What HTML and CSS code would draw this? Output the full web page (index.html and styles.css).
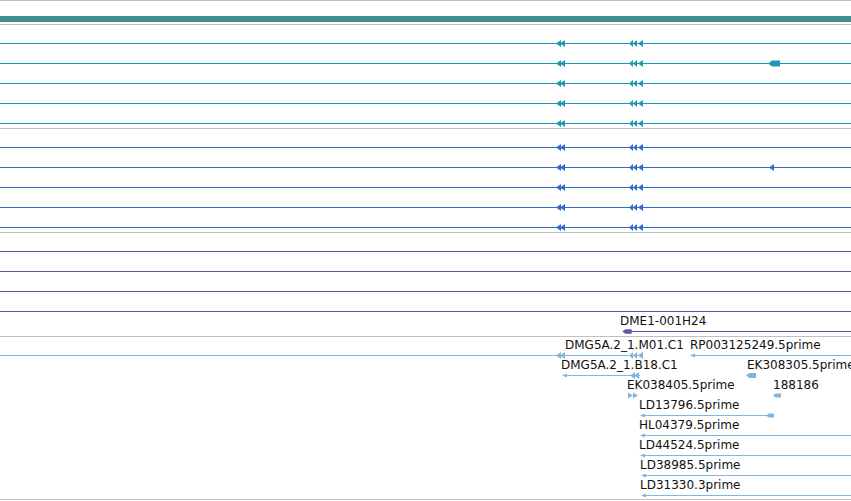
FILE: index.html
```html
<!DOCTYPE html>
<html lang="en">
<head>
    <meta charset="UTF-8">
    <title>Tracks</title>
    <link rel="stylesheet" href="styles.css">
</head>
<body>
    <!--glyph shapes, used by every track-->
    <svg class="defs" width="0" height="0">
        <symbol id="l1" viewBox="0 0 6 9"><polygon points="0,4.5 5,2.5 5,6.5"/></symbol>
        <symbol id="l2" viewBox="0 0 10 9"><polygon points="0,4.5 5,1 5,8"/><polygon points="4,4.5 9,1 9,8"/></symbol>
        <symbol id="l3" viewBox="0 0 14 9"><polygon points="0,4.5 4,1 4,8"/><polygon points="4,4.5 8,1 8,8"/><polygon points="9,4.5 14,1 14,8"/></symbol>
        <symbol id="tri" viewBox="0 0 6 9"><polygon points="0,4.5 5,1 5,8"/></symbol>
        <symbol id="blk" viewBox="0 0 12 9"><polygon points="0,4.5 4,1.5 12,1.5 12,7.5 4,7.5"/></symbol>
        <symbol id="r2" viewBox="0 0 10 9"><polygon points="0,1.5 5,4.5 0,7.5"/><polygon points="5,1.5 10,4.5 5,7.5"/></symbol>
    </svg>

    <div class="header">
        <div class="scale"></div>
    </div>

    <!--track 1-->
    <div class="track teal">
        <div class="row"><i class="line"></i>
            <svg class="g w10" style="left:556px"><use href="#l2"/></svg>
            <svg class="g w14" style="left:629px"><use href="#l3"/></svg>
        </div>
        <div class="row"><i class="line"></i>
            <svg class="g w10" style="left:556px"><use href="#l2"/></svg>
            <svg class="g w14" style="left:629px"><use href="#l3"/></svg>
            <svg class="g w12" style="left:768px"><use href="#blk"/></svg>
        </div>
        <div class="row"><i class="line"></i>
            <svg class="g w10" style="left:556px"><use href="#l2"/></svg>
            <svg class="g w14" style="left:629px"><use href="#l3"/></svg>
        </div>
        <div class="row"><i class="line"></i>
            <svg class="g w10" style="left:556px"><use href="#l2"/></svg>
            <svg class="g w14" style="left:629px"><use href="#l3"/></svg>
        </div>
        <div class="row"><i class="line"></i>
            <svg class="g w10" style="left:556px"><use href="#l2"/></svg>
            <svg class="g w14" style="left:629px"><use href="#l3"/></svg>
        </div>
    </div>

    <!--track 2-->
    <div class="track blue">
        <div class="row"><i class="line"></i>
            <svg class="g w10" style="left:556px"><use href="#l2"/></svg>
            <svg class="g w14" style="left:629px"><use href="#l3"/></svg>
        </div>
        <div class="row"><i class="line"></i>
            <svg class="g w10" style="left:556px"><use href="#l2"/></svg>
            <svg class="g w14" style="left:629px"><use href="#l3"/></svg>
            <svg class="g w6" style="left:769px"><use href="#tri"/></svg>
        </div>
        <div class="row"><i class="line"></i>
            <svg class="g w10" style="left:556px"><use href="#l2"/></svg>
            <svg class="g w14" style="left:629px"><use href="#l3"/></svg>
        </div>
        <div class="row"><i class="line"></i>
            <svg class="g w10" style="left:556px"><use href="#l2"/></svg>
            <svg class="g w14" style="left:629px"><use href="#l3"/></svg>
        </div>
        <div class="row"><i class="line"></i>
            <svg class="g w10" style="left:556px"><use href="#l2"/></svg>
            <svg class="g w14" style="left:629px"><use href="#l3"/></svg>
        </div>
    </div>

    <!--track 3-->
    <div class="track purple">
        <div class="row"><i class="line"></i></div>
        <div class="row"><i class="line"></i></div>
        <div class="row"><i class="line"></i></div>
        <div class="row"><i class="line"></i></div>
        <div class="row">
            <span class="label" style="left:620px">DME1-001H24</span>
            <i class="line" style="left:626px"></i>
            <svg class="g w12 thin" style="left:621px"><use href="#blk"/></svg>
        </div>
    </div>

    <!--track 4-->
    <div class="track light last">
        <div class="row">
            <span class="label" style="left:565px">DMG5A.2_1.M01.C1</span>
            <span class="label" style="left:690px">RP003125249.5prime</span>
            <i class="line" style="left:0;width:642px"></i>
            <svg class="g w10" style="left:556px"><use href="#l2"/></svg>
            <svg class="g w14" style="left:629px"><use href="#l3"/></svg>
            <i class="line" style="left:692px"></i>
            <svg class="g w6" style="left:690px"><use href="#l1"/></svg>
        </div>
        <div class="row">
            <span class="label" style="left:561px">DMG5A.2_1.B18.C1</span>
            <span class="label" style="left:747px">EK308305.5prime</span>
            <i class="line" style="left:564px;width:76px"></i>
            <svg class="g w6" style="left:562px"><use href="#l1"/></svg>
            <svg class="g w10" style="left:630px"><use href="#l2"/></svg>
            <svg class="g w10" style="left:746px"><use href="#blk"/></svg>
        </div>
        <div class="row">
            <span class="label" style="left:627px">EK038405.5prime</span>
            <span class="label" style="left:773px">188186</span>
            <svg class="g w10" style="left:628px"><use href="#r2"/></svg>
            <svg class="g w8" style="left:773px"><use href="#blk"/></svg>
        </div>
        <div class="row">
            <span class="label" style="left:639px">LD13796.5prime</span>
            <i class="line" style="left:642px;width:128px"></i>
            <svg class="g w6" style="left:640px"><use href="#l1"/></svg>
            <svg class="g w8" style="left:766px"><use href="#blk"/></svg>
        </div>
        <div class="row">
            <span class="label" style="left:639px">HL04379.5prime</span>
            <i class="line" style="left:642px"></i>
            <svg class="g w6" style="left:640px"><use href="#l1"/></svg>
        </div>
        <div class="row">
            <span class="label" style="left:639px">LD44524.5prime</span>
            <i class="line" style="left:642px"></i>
            <svg class="g w6" style="left:640px"><use href="#l1"/></svg>
        </div>
        <div class="row">
            <span class="label" style="left:640px">LD38985.5prime</span>
            <i class="line" style="left:643px"></i>
            <svg class="g w6" style="left:641px"><use href="#l1"/></svg>
        </div>
        <div class="row">
            <span class="label" style="left:640px">LD31330.3prime</span>
            <i class="line" style="left:643px"></i>
            <svg class="g w6" style="left:641px"><use href="#l1"/></svg>
        </div>
    </div>
</body>
</html>
```

FILE: styles.css
```css
/*整页*/
body {
    margin: 0;
    width: 851px;
    overflow: hidden;
    background-color: #fff;
    font-family: "DejaVu Sans", "Liberation Sans", sans-serif;
    font-size: 12px;
}

.defs {
    position: absolute;
    width: 0;
    height: 0;
}

/*顶部比例尺*/
.header {
    border-top: 1px solid #c0c0c0;
    padding-top: 15px;
}
.scale {
    height: 6px;
    margin-bottom: 2px;
    background-color: #418f92;
}

/*轨道*/
.track {
    border-top: 1px solid #c0c0c0;
    padding-bottom: 3px;
}
.track.last {
    padding-bottom: 2px;
    border-bottom: 1px solid #c0c0c0;
}
.row {
    position: relative; /*父相子绝*/
    height: 20px;
}

/*特征线 left/width 来自坐标*/
.line {
    position: absolute;
    top: 18px;
    left: 0;
    right: 0;
    height: 1px;
    background-color: currentColor;
}
.line[style*="width"] {
    right: auto;
}

/*箭头*/
.g {
    position: absolute;
    top: 14px;
    height: 9px;
    fill: currentColor;
}
.w6 { width: 6px; }
.w8 { width: 8px; }
.w10 { width: 10px; }
.w12 { width: 12px; }
.w14 { width: 14px; }
.thin {
    top: 15px;
    height: 7px;
}

.label {
    position: absolute;
    top: 1px;
    line-height: 14px;
    white-space: nowrap;
    color: #111;
}

/*颜色*/
.teal { color: #1b98b4; }
.blue { color: #2f6ccc; }
.purple { color: #6753a6; }
.light { color: #82b6dc; }
```
